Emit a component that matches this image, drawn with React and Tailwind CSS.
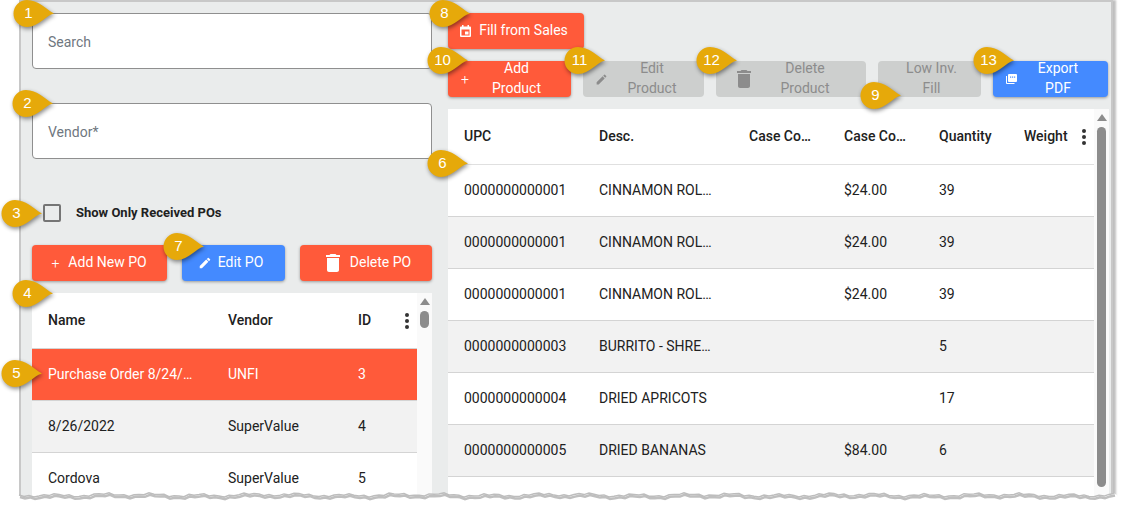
import React from "react";

const font = { fontFamily: "Roboto, sans-serif" };
const PENCIL = "M3 17.25V21h3.75L17.81 9.94l-3.75-3.75L3 17.25zM20.71 7.04a1 1 0 0 0 0-1.41l-2.34-2.34a1 1 0 0 0-1.41 0l-1.83 1.83 3.75 3.75 1.83-1.83z";
const TRASH = "M6 19c0 1.1.9 2 2 2h8c1.1 0 2-.9 2-2V7H6v12zM19 4h-3.5l-1-1h-5l-1 1H5v2h14V4z";

function Icon({ d, size = 14, className = "" }) {
  return (
    <svg width={size} height={size} viewBox="0 0 24 24" fill="currentColor" className={`shrink-0 ${className}`}>
      <path d={d} />
    </svg>
  );
}

function Plus() {
  return <span className="text-[14px] leading-none font-light w-[10px] text-center shrink-0">+</span>;
}

function CalendarIcon() {
  return (
    <svg width="11" height="12" viewBox="0 0 11 12" className="shrink-0">
      <path d="M1 1.5h9a1 1 0 0 1 1 1V11a1 1 0 0 1-1 1H1a1 1 0 0 1-1-1V2.5a1 1 0 0 1 1-1z" fill="currentColor" />
      <rect x="1.5" y="4.5" width="8" height="6" fill="#ff5a3a" />
      <rect x="5" y="6.5" width="3.5" height="3" fill="currentColor" />
      <rect x="2" y="0" width="1.5" height="2" fill="currentColor" />
      <rect x="7.5" y="0" width="1.5" height="2" fill="currentColor" />
    </svg>
  );
}

function PdfIcon() {
  return (
    <svg width="11" height="10" viewBox="0 0 11 10" className="shrink-0 ml-[1px] -mr-[1px]">
      <path d="M3 0h7a1 1 0 0 1 1 1v6a1 1 0 0 1-1 1H3a1 1 0 0 1-1-1V1a1 1 0 0 1 1-1z" fill="currentColor" />
      <rect x="4" y="2.5" width="1.2" height="1.2" fill="#448aff" />
      <rect x="6" y="2.5" width="1.2" height="1.2" fill="#448aff" />
      <rect x="8" y="2.5" width="1.2" height="1.2" fill="#448aff" />
      <path d="M0 2h1v7h7.5v1H1a1 1 0 0 1-1-1z" fill="currentColor" />
    </svg>
  );
}

// two-line buttons keep the icon at the left and centre the label in what is left
function Btn({ color = "orange", icon, gap = "gap-2", className = "", wrap, children }) {
  const colors = {
    orange: "bg-[#ff5a3a] text-white shadow-[0_1px_3px_rgba(0,0,0,0.35)]",
    blue: "bg-[#448aff] text-white shadow-[0_1px_3px_rgba(0,0,0,0.35)]",
    off: "bg-[#cdcfce] text-[#8c8c8c]",
  };
  return (
    <button className={`h-9 shrink-0 rounded-[4px] flex items-center text-[14px] leading-[20px] ${wrap ? "pl-3 pr-2" : `justify-center ${gap}`} ${colors[color]} ${className}`}>
      {icon}
      <span className={`-mt-[2px] ${wrap ? "flex-1 text-center" : ""}`}>{children}</span>
    </button>
  );
}

function Dots() {
  return (
    <div className="flex flex-col gap-[2px] items-center w-[6px] shrink-0">
      <span className="w-[4px] h-[4px] rounded-full bg-[#333]" />
      <span className="w-[4px] h-[4px] rounded-full bg-[#333]" />
      <span className="w-[4px] h-[4px] rounded-full bg-[#333]" />
    </div>
  );
}

function Cell({ w, children }) {
  return <div className={`${w} shrink-0 pl-4 pr-2 truncate`}>{children}</div>;
}

function Row({ cols, widths, className = "" }) {
  return (
    <div className={`h-[52px] flex items-center border-b border-[#d4d4d4] text-[14px] ${className}`}>
      {cols.map((c, i) => (
        <Cell key={i} w={widths[i]}>{c}</Cell>
      ))}
    </div>
  );
}

function ScrollBar({ thumb }) {
  return (
    <div className="w-[15px] shrink-0 bg-[#fafafa] flex flex-col items-center pt-[5px]">
      <span className="w-0 h-0 border-x-[5px] border-x-transparent border-b-[7px] border-b-[#8c8c8c]" />
      <span className={`w-[9px] rounded-full bg-[#8c8c8c] mt-[6px] ${thumb}`} />
    </div>
  );
}

const PO_WIDTHS = ["w-[180px]", "w-[130px]", "w-[62px]"];
const ITEM_WIDTHS = ["w-[135px]", "w-[150px]", "w-[95px]", "w-[95px]", "w-[85px]", "w-[86px]"];

const items = [
  ["0000000000001", "CINNAMON ROL…", "", "$24.00", "39", ""],
  ["0000000000001", "CINNAMON ROL…", "", "$24.00", "39", ""],
  ["0000000000001", "CINNAMON ROL…", "", "$24.00", "39", ""],
  ["0000000000003", "BURRITO - SHRE…", "", "", "5", ""],
  ["0000000000004", "DRIED APRICOTS", "", "", "17", ""],
  ["0000000000005", "DRIED BANANAS", "", "$84.00", "6", ""],
  ["", "", "", "", "", ""],
];

const callouts = [
  ["1", 13, 0], ["2", 12, 90], ["3", 1, 200], ["4", 12, 280], ["5", 1, 360], ["7", 163, 233],
  ["8", 429, 0], ["10", 427, 47], ["11", 564, 47], ["12", 696, 47], ["9", 860, 82], ["13", 973, 47], ["6", 427, 150],
];

function Callout({ n, x, y }) {
  return (
    <div className="absolute w-[42px] h-[28px]" style={{ left: x, top: y }}>
      <svg width="42" height="28" viewBox="0 0 42 28" className="absolute inset-0 overflow-visible drop-shadow-[1px_2px_2px_rgba(0,0,0,0.45)]">
        <path d="M14 0C25 0 33 9 41 13.5C33 15 26 27 14 27A13.5 13.5 0 0 1 14 0Z" fill="#e6a90a" />
      </svg>
      <span className="absolute left-0 top-0 w-[31px] h-[27px] flex items-center justify-center text-white text-[15px] font-['Liberation_Sans']">{n}</span>
    </div>
  );
}

// torn edge along the bottom of the frame
function tornPath() {
  let d = "M0 6";
  for (let x = 5; x <= 1095; x += 5) {
    const y = 6 + Math.sin(x * 0.13) * 1.1 + Math.sin(x * 0.47) * 0.9 + Math.sin(x * 1.3) * 0.5;
    d += `L${x} ${y.toFixed(1)}`;
  }
  return d;
}

export default function App() {
  const edge = tornPath();
  return (
    <div className="relative w-[1124px] h-[511px] bg-white overflow-hidden" style={font}>
      <div className="w-[1094px] h-[496px] ml-[19px] border-x-2 border-t-2 border-[#c8c8c8] bg-[#eaecec] pl-[11px] pt-[11px] flex gap-4 overflow-hidden shadow-[3px_0_2px_rgba(0,0,0,0.25)] text-[#212121]">
        {/* po side */}
        <div className="w-[400px] shrink-0 flex flex-col">
          <div className="h-14 shrink-0 bg-white rounded-[4px] border border-[#8f8f8f] flex items-center px-[15px] pt-[2px] text-[14px] text-[#6f7780]">Search</div>
          <div className="h-14 shrink-0 mt-[34px] bg-white rounded-[4px] border border-[#8f8f8f] flex items-center px-[15px] pt-[2px] text-[14px] text-[#6f7780]">Vendor*</div>
          <div className="mt-[45px] h-[18px] shrink-0 flex items-center pl-[11px]">
            <span className="w-[18px] h-[18px] border-2 border-[#757575] rounded-[2px]" />
            <span className="ml-[15px] text-[13px] font-bold">Show Only Received POs</span>
          </div>
          <div className="mt-[23px] flex gap-[15px] shrink-0">
            <Btn className="w-[135px] pr-[2px]" icon={<Plus />}>Add New PO</Btn>
            <Btn color="blue" className="w-[103px] pr-[6px]" gap="gap-[6px]" icon={<Icon d={PENCIL} size={14} />}>Edit PO</Btn>
            <Btn className="w-[132px]" gap="gap-[5px]" icon={<Icon d={TRASH} size={24} />}>Delete PO</Btn>
          </div>
          <div className="mt-3 flex flex-1 bg-white">
            <div className="w-[385px]">
              <div className="h-[56px] flex items-center border-b border-[#d4d4d4] text-[14px] font-medium bg-white">
                <Cell w={PO_WIDTHS[0]}>Name</Cell>
                <Cell w={PO_WIDTHS[1]}>Vendor</Cell>
                <Cell w={PO_WIDTHS[2]}>ID</Cell>
                <Dots />
              </div>
              <Row cols={["Purchase Order 8/24/…", "UNFI", "3"]} widths={PO_WIDTHS} className="bg-[#ff5a3a] text-white" />
              <Row cols={["8/26/2022", "SuperValue", "4"]} widths={PO_WIDTHS} className="bg-[#f2f2f2]" />
              <Row cols={["Cordova", "SuperValue", "5"]} widths={PO_WIDTHS} className="bg-white" />
            </div>
            <ScrollBar thumb="h-[17px]" />
          </div>
        </div>

        {/* product side */}
        <div className="w-[660px] shrink-0 flex flex-col">
          <Btn className="w-[136px] pr-1" icon={<CalendarIcon />}>Fill from Sales</Btn>
          <div className="mt-3 flex gap-3 shrink-0">
            <Btn wrap className="w-[123px]" icon={<Plus />}>Add<br />Product</Btn>
            <Btn wrap color="off" className="w-[121px]" icon={<Icon d={PENCIL} size={13} />}>Edit<br />Product</Btn>
            <Btn wrap color="off" className="w-[150px]" icon={<Icon d={TRASH} size={24} className="ml-1 -mr-1" />}>Delete<br />Product</Btn>
            <Btn wrap color="off" className="w-[103px]">Low Inv.<br />Fill</Btn>
            <Btn wrap color="blue" className="w-[115px]" icon={<PdfIcon />}>Export<br />PDF</Btn>
          </div>
          <div className="mt-3 flex flex-1 bg-white">
            <div className="w-[646px]">
              <div className="h-[56px] flex items-center border-b border-[#e0e0e0] text-[14px] font-medium">
                <Cell w={ITEM_WIDTHS[0]}>UPC</Cell>
                <Cell w={ITEM_WIDTHS[1]}>Desc.</Cell>
                <Cell w={ITEM_WIDTHS[2]}>Case Co…</Cell>
                <Cell w={ITEM_WIDTHS[3]}>Case Co…</Cell>
                <Cell w={ITEM_WIDTHS[4]}>Quantity</Cell>
                <Cell w="w-[73px]">Weight</Cell>
                <Dots />
              </div>
              {items.map((r, i) => (
                <Row key={i} cols={r} widths={ITEM_WIDTHS} className={i % 2 ? "bg-[#f2f2f2]" : "bg-white"} />
              ))}
            </div>
            <ScrollBar thumb="h-[360px]" />
          </div>
        </div>
      </div>

      {/* torn bottom edge */}
      <svg width="1124" height="24" viewBox="0 0 1124 24" className="absolute left-0 top-[489px]">
        <g transform="translate(19 0)">
          <path d={`${edge}L1098 6V24H-19V6Z`} fill="#fff" />
          <path d={edge} transform="translate(1 2)" fill="none" stroke="#000" strokeOpacity="0.25" strokeWidth="2.5" />
          <path d={edge} fill="none" stroke="#bdbdbd" strokeWidth="1.5" />
        </g>
      </svg>

      {callouts.map(([n, x, y]) => (
        <Callout key={n} n={n} x={x} y={y} />
      ))}
    </div>
  );
}
